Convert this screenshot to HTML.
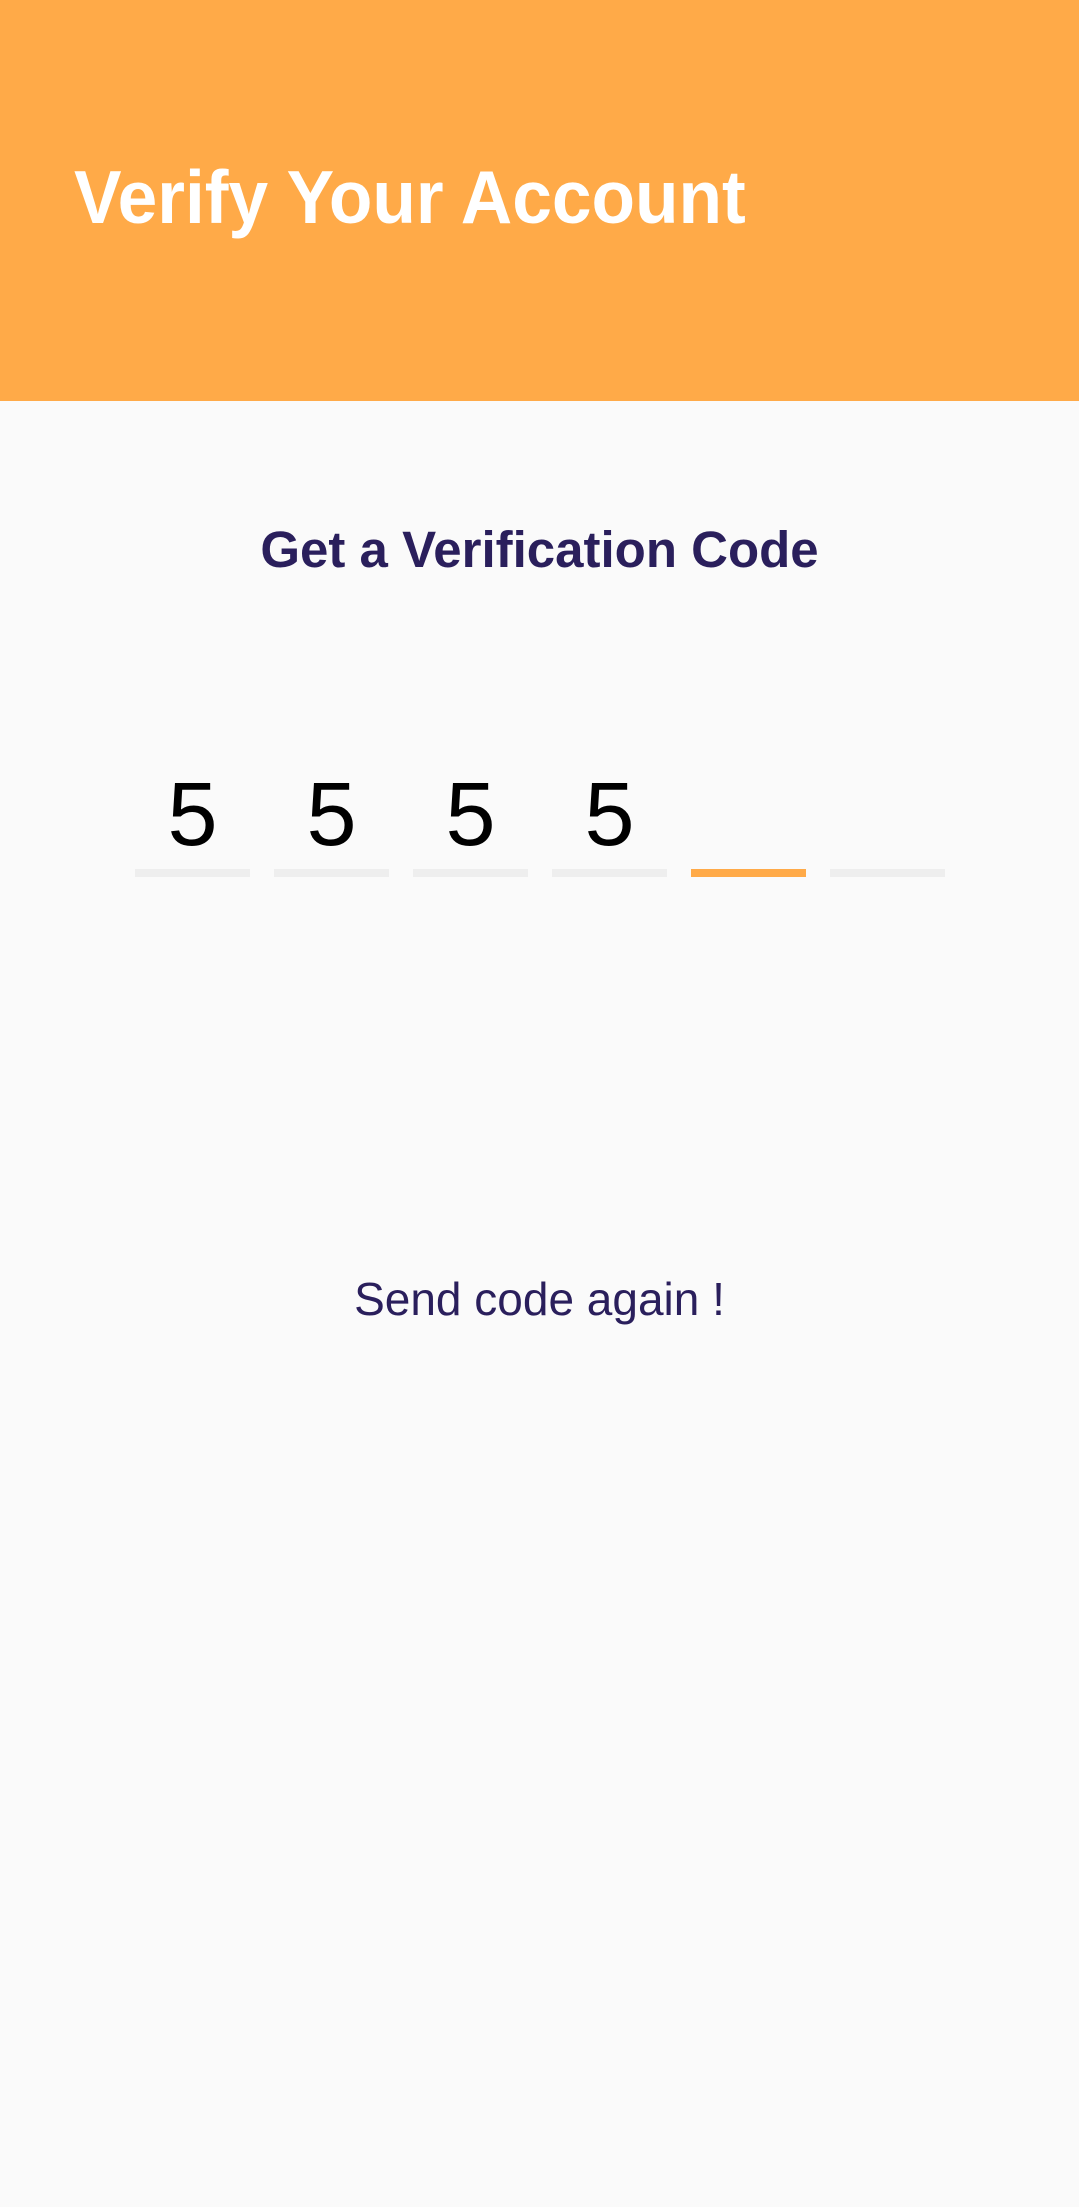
<!DOCTYPE html>
<html><head><meta charset="utf-8"><style>
html,body{margin:0;padding:0;}
body{width:1079px;height:2207px;background:#fafafa;font-family:"Liberation Sans",sans-serif;position:relative;overflow:hidden;}
.hdr{position:absolute;left:0;top:0;width:1079px;height:401px;background:#ffaa48;}
.t{position:absolute;left:74px;top:160px;font-size:75px;font-weight:bold;color:#fff;line-height:1;white-space:nowrap;transform-origin:left top;transform:scaleX(0.95);}
.s{position:absolute;left:0;width:1079px;top:524px;text-align:center;font-size:51px;font-weight:bold;color:#2a1f5c;line-height:1;}
.d{position:absolute;top:770px;width:115px;text-align:center;font-size:90px;color:#000;line-height:1;}
.u{position:absolute;top:869px;width:115px;height:8px;background:#eeeeee;}
.u.a{background:#ffaa48;}
.r{position:absolute;left:0;width:1079px;top:1276px;text-align:center;font-size:46px;color:#2a1f5c;line-height:1;}
</style></head><body>
<div class="hdr"><div class="t">Verify Your Account</div></div>
<div class="s">Get a Verification Code</div>
<div class="d" style="left:135px">5</div>
<div class="d" style="left:274px">5</div>
<div class="d" style="left:413px">5</div>
<div class="d" style="left:552px">5</div>
<div class="u" style="left:135px"></div>
<div class="u" style="left:274px"></div>
<div class="u" style="left:413px"></div>
<div class="u" style="left:552px"></div>
<div class="u a" style="left:691px"></div>
<div class="u" style="left:830px"></div>
<div class="r">Send code again !</div>
</body></html>
